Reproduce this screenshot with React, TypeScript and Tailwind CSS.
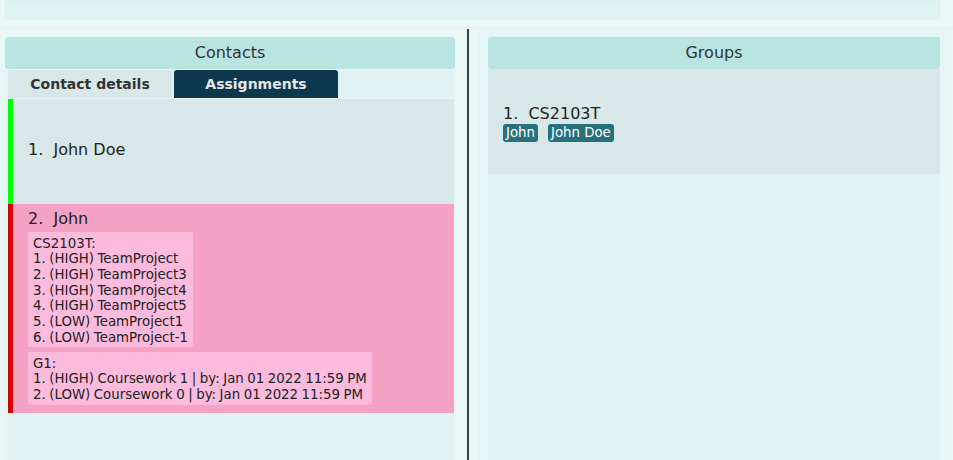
const cs2103t = [
  "CS2103T:",
  "1. (HIGH) TeamProject",
  "2. (HIGH) TeamProject3",
  "3. (HIGH) TeamProject4",
  "4. (HIGH) TeamProject5",
  "5. (LOW) TeamProject1",
  "6. (LOW) TeamProject-1",
];

const g1 = [
  "G1:",
  "1. (HIGH) Coursework 1 | by: Jan 01 2022 11:59 PM",
  "2. (LOW) Coursework 0 | by: Jan 01 2022 11:59 PM",
];

function TaskBox({ lines }: { lines: string[] }) {
  return (
    <div className="self-start bg-[#fcbadc] rounded-[2px] px-[5px] pt-[3.5px] pb-[2px] text-[13.33px] leading-[15.67px] [word-spacing:-0.7px] text-[#222]">
      {lines.map((l, i) => (
        <div key={i} className="whitespace-nowrap">
          {l}
        </div>
      ))}
    </div>
  );
}

function PanelHeader({ title }: { title: string }) {
  return (
    <div className="h-[32px] bg-[#b8e4e2] rounded-[3px] flex items-center justify-center text-[16px] text-[#333]">
      {title}
    </div>
  );
}

export default function App() {
  return (
    <div className="w-[953px] h-[460px] overflow-hidden bg-[#e9f7f7] font-['DejaVu_Sans',sans-serif] flex flex-col">
      {/* Command box */}
      <div className="ml-[5px] w-[935px] h-[20px] bg-[#e0f3f3] border border-[#dbefef]" />

      <div className="mt-[7px] flex-1 flex border-t border-[#e2f3f3]">
        {/* Contacts */}
        <div className="w-[455px] pl-[5px] pt-[9px] flex flex-col">
          <PanelHeader title="Contacts" />
          <div className="flex-1 bg-[#e6f5f5] pl-[3px] pr-[1px] pt-[1px] flex flex-col">
            <div className="h-[28px] flex gap-[2px] bg-[#e0f2f2]">
              <div className="w-[164px] bg-[#d8e8e8] rounded-t-[3px] flex items-center justify-center text-[14px] font-bold text-[#333]">
                Contact details
              </div>
              <div className="w-[164px] bg-[#0b384d] rounded-t-[3px] flex items-center justify-center text-[14px] font-bold text-[#e6e6e6]">
                Assignments
              </div>
            </div>
            <div className="flex-1 mt-[1px] bg-[#e0f2f2] flex flex-col">
              <div className="h-[105px] flex bg-[#d8e8e8]">
                <div className="w-[5px] bg-[#00ff00]" />
                <div className="pl-[15px] pb-[4px] flex items-center text-[16px] text-[#222]">
                  1.&nbsp;&nbsp;John Doe
                </div>
              </div>
              <div className="flex bg-[#f4a2c4]">
                <div className="w-[5px] bg-[#d20000]" />
                <div className="pl-[15px] pt-[4px] pb-[8px] flex flex-col gap-[5px]">
                  <div className="text-[16px] leading-[22px] text-[#222] -mb-[3px]">2.&nbsp;&nbsp;John</div>
                  <TaskBox lines={cs2103t} />
                  <TaskBox lines={g1} />
                </div>
              </div>
            </div>
          </div>
        </div>

        {/* Divider */}
        <div className="ml-[12px] w-[2px] bg-[#3a3f40] mt-[1px]" />

        {/* Groups */}
        <div className="ml-[9px] w-[473px] bg-[#e6f5f5] border-l border-r border-[#e2f3f3] pl-[9px] pr-[10px] pt-[9px] flex flex-col">
          <PanelHeader title="Groups" />
          <div className="flex-1 bg-[#e0f2f2] flex flex-col">
            <div className="h-[105px] bg-[#d8e8e8] pl-[15px] flex flex-col justify-center">
              <div className="text-[16px] leading-[19px] text-[#222] pt-[3px]">1.&nbsp;&nbsp;CS2103T</div>
              <div className="flex gap-[10px] mt-[1px]">
                <span className="bg-[#29707e] text-white text-[13.33px] leading-[18px] px-[3px] rounded-[3px]">John</span>
                <span className="bg-[#29707e] text-white text-[13.33px] leading-[18px] px-[3px] rounded-[3px]">John Doe</span>
              </div>
            </div>
          </div>
        </div>
      </div>
    </div>
  );
}
